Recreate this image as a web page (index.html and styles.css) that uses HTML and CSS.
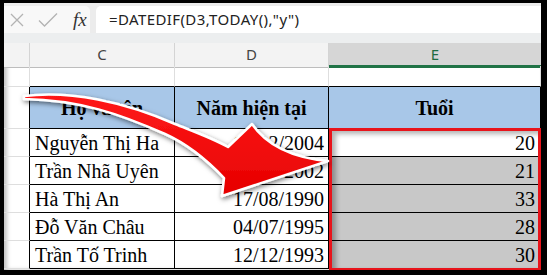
FILE: index.html
```html
<!DOCTYPE html>
<html lang="vi">
<head>
    <meta charset="UTF-8">
    <meta name="viewport" content="width=device-width, initial-scale=1.0">
    <title>Tính tuổi với DATEDIF</title>
    <link rel="stylesheet" href="styles.css">
</head>
<body>
    <div class="frame">
        <div class="formula-bar">
            <div class="fx-tools">
                <svg class="tool-icon" width="16" height="16" viewBox="0 0 16 16">
                    <path d="M2 2 L14 14 M14 2 L2 14" stroke="#b3b3b3" stroke-width="1.3" fill="none"/>
                </svg>
                <svg class="tool-icon" width="20" height="16" viewBox="0 0 20 16">
                    <path d="M1 8.5 L6.5 14 L19 1.5" stroke="#b3b3b3" stroke-width="1.3" fill="none"/>
                </svg>
                <span class="fx">fx</span>
            </div>
            <div class="formula-input">=DATEDIF(D3,TODAY(),"y")</div>
        </div>
        <div class="band"></div>

        <div class="sheet">
            <div class="row head-row">
                <div class="col-head"></div>
                <div class="col-head">C</div>
                <div class="col-head">D</div>
                <div class="col-head active">E</div>
            </div>

            <!-- empty row above the table -->
            <div class="row blank-row">
                <div class="cell"></div>
                <div class="cell above"></div>
                <div class="cell above"></div>
                <div class="cell above"></div>
            </div>

            <div class="row title-row">
                <div class="cell edge"></div>
                <div class="th">Họ và tên</div>
                <div class="th">Năm hiện tại</div>
                <div class="th">Tuổi</div>
            </div>

            <div class="row data-row">
                <div class="cell edge"></div>
                <div class="td">Nguyễn Thị Ha</div>
                <div class="td num">12/12/2004</div>
                <div class="td num age first">20</div>
            </div>

            <div class="row data-row">
                <div class="cell edge"></div>
                <div class="td">Trần Nhã Uyên</div>
                <div class="td num">15/05/2002</div>
                <div class="td num age">21</div>
            </div>

            <div class="row data-row">
                <div class="cell edge"></div>
                <div class="td">Hà Thị An</div>
                <div class="td num">17/08/1990</div>
                <div class="td num age">33</div>
            </div>

            <div class="row data-row">
                <div class="cell edge"></div>
                <div class="td">Đỗ Văn Châu</div>
                <div class="td num">04/07/1995</div>
                <div class="td num age">28</div>
            </div>

            <div class="row data-row">
                <div class="cell edge"></div>
                <div class="td">Trần Tố Trinh</div>
                <div class="td num">12/12/1993</div>
                <div class="td num age">30</div>
            </div>

            <!-- red box round the age results -->
            <div class="selection"></div>
        </div>
    </div>

    <!-- big curved arrow pointing at the results -->
    <svg class="arrow" width="547" height="275" viewBox="0 0 547 275">
        <defs>
            <filter id="arrow-shadow" x="-10%" y="-10%" width="130%" height="140%">
                <feDropShadow dx="1" dy="2" stdDeviation="2.5" flood-color="#000" flood-opacity="0.55"/>
            </filter>
            <linearGradient id="arrow-fill" x1="0" y1="0" x2="0" y2="1">
                <stop offset="0" stop-color="#ff1a1a"/>
                <stop offset="1" stop-color="#e60000"/>
            </linearGradient>
        </defs>
        <path d="M24 96
                 C 70 90, 125 102, 175 124
                 C 195 132, 212 138, 228 147
                 L 252 124
                 Q 274 156, 328 161
                 L 222 196
                 L 224 178
                 C 205 158, 185 143, 165 134
                 C 120 114, 80 100, 24 99 Z"
              fill="url(#arrow-fill)" stroke="#fff" stroke-width="2.5" stroke-linejoin="round"
              filter="url(#arrow-shadow)"/>
    </svg>
</body>
</html>
```

FILE: styles.css
```css
body {
    margin: 0;
    padding: 0;
    position: relative;
    background-color: #000;
}

.frame {
    width: 547px;
    height: 275px;
    box-sizing: border-box;
    border-style: solid;
    border-color: #000;
    border-width: 3px 6px 5px 4px;
    background-color: #fff;
    overflow: hidden;
    box-shadow: inset 3px 0 4px rgba(0, 0, 0, 0.25);
}

/* formula bar */
.formula-bar {
    display: flex;
    gap: 6px;
    height: 30px;
    box-sizing: border-box;
    padding-top: 3px;
    background-color: #ececec;
}

.fx-tools {
    width: 86px;
    display: flex;
    align-items: center;
    padding-left: 5px;
    box-sizing: border-box;
    background-color: #f8f8f8;
    border-radius: 0 5px 0 0;
}

.tool-icon {
    margin-right: 13px;
}

.fx {
    font-family: "Liberation Serif", serif;
    font-style: italic;
    font-size: 19px;
    color: #333;
    margin-left: 2px;
}

.formula-input {
    flex: 1;
    background-color: #fff;
    border-radius: 5px 0 0 0;
    font-family: "Noto Sans", sans-serif;
    font-size: 15px;
    letter-spacing: 0.4px;
    color: #222;
    line-height: 27px;
    padding-left: 13px;
}

.band {
    height: 10px;
    background-color: #eceeef;
}

/* spreadsheet grid */
.sheet {
    position: relative;
}

.row {
    display: grid;
    grid-template-columns: 26px 145px 154px 212px;
}

.row > div {
    box-sizing: border-box;
}

.head-row { height: 23px; }
.blank-row { height: 21px; }
.title-row { height: 42px; }
.data-row { height: 28px; }

.col-head {
    background-color: #f3f3f3;
    border-right: 1px solid #d4d4d4;
    border-bottom: 1px solid #bdbdbd;
    font-family: "Noto Sans", sans-serif;
    font-size: 15px;
    color: #444;
    text-align: center;
    line-height: 22px;
}

.col-head.active {
    background-color: #d6d6d6;
    color: #1e6b41;
    border-bottom: 3px solid #217346;
    border-right: none;
}

.cell {
    border-right: 1px solid #dedede;
    border-bottom: 1px solid #dedede;
}

.cell.above {
    border-bottom: 1px solid #000;
}

.cell.edge {
    border-right: 1px solid #000;
}

.th,
.td {
    font-family: "Liberation Serif", serif;
    font-size: 20px;
    color: #000;
    border-right: 1px solid #000;
    border-bottom: 1px solid #000;
}

.th {
    background-color: #a8c7e8;
    font-weight: bold;
    display: flex;
    align-items: center;
    justify-content: center;
    padding-top: 2px;
}

.td {
    display: flex;
    align-items: flex-end;
    padding: 0 4px 1px 5px;
    line-height: 24px;
    white-space: nowrap;
}

.td.num {
    justify-content: flex-end;
}

.td.age {
    background-color: #c8c8c8;
    padding-right: 5px;
}

.td.age.first {
    background-color: #fff;
}

/* overlay frame drawn on top of the E results */
.selection {
    position: absolute;
    left: 325px;
    top: 85px;
    width: 212px;
    height: 143px;
    box-sizing: border-box;
    border: 3px solid #e8141b;
    box-shadow: inset 4px 3px 5px rgba(0, 0, 0, 0.3);
}

.arrow {
    position: absolute;
    left: 0;
    top: 0;
    z-index: 2;
}
```
